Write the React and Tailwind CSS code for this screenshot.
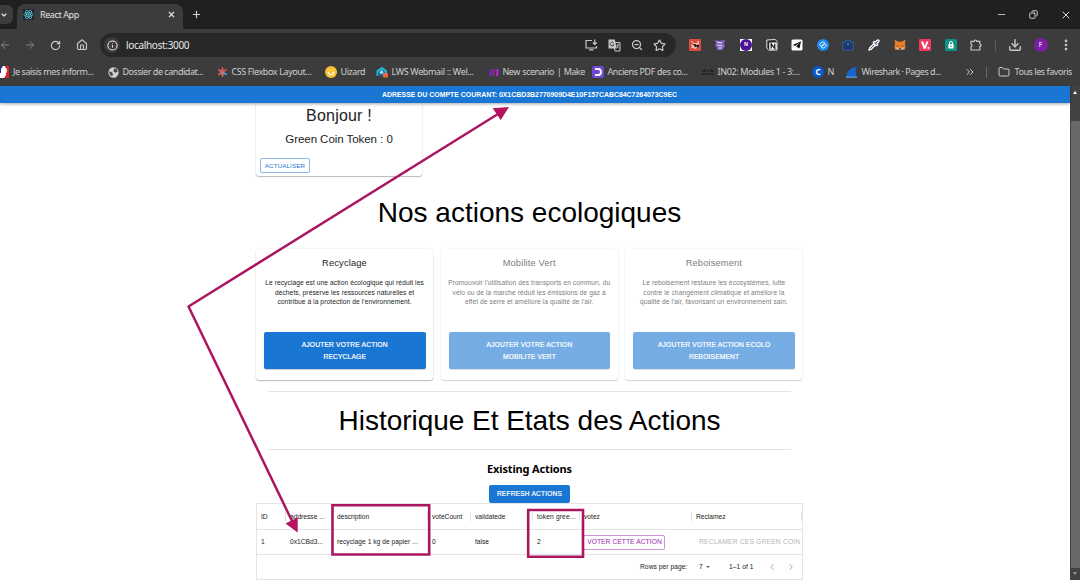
import React from "react";
import {
  ArrowLeft, ArrowRight, RotateCw, House, Info, ZoomOut, Star,
  Download, EllipsisVertical, Folder, ChevronsRight, ChevronDown, X, Plus, Minus,
  Copy, ChevronLeft, ChevronRight, Pipette,
} from "lucide-react";

const ui = "font-['Noto_Sans',sans-serif]";

function ReactLogo() {
  return (
    <svg viewBox="0 0 22 22" className="h-[11px] w-[11px] shrink-0 bg-[#20262b]">
      <g fill="none" stroke="#58c4dc" strokeWidth="1.5">
        <ellipse cx="11" cy="11" rx="9.5" ry="3.8" />
        <ellipse cx="11" cy="11" rx="9.5" ry="3.8" transform="rotate(60 11 11)" />
        <ellipse cx="11" cy="11" rx="9.5" ry="3.8" transform="rotate(120 11 11)" />
      </g>
      <circle cx="11" cy="11" r="2" fill="#58c4dc" />
    </svg>
  );
}

function TitleBar() {
  return (
    <div className="flex h-[29px] bg-[#202020]">
      <div className="flex h-full w-[17px] items-center">
        <div className="flex h-[19px] w-[13px] items-center justify-center rounded-r-md bg-[#3c3c3c] pr-1.5">
          <ChevronDown className="h-[8px] w-[8px] shrink-0 text-[#e3e3e3]" strokeWidth={3.5} />
        </div>
      </div>
      <div className="mt-[4px] flex h-[25px] w-[166px] items-center rounded-t-lg bg-[#3c3c3c] pb-[4px] pl-[6px] pr-[7px]">
        <ReactLogo />
        <span className="ml-[6px] grow text-[9px] tracking-[-0.4px] text-[#e3e3e3]">React App</span>
        <X className="h-[9px] w-[9px] text-[#e3e3e3]" strokeWidth={3} />
      </div>
      <Plus className="ml-[8px] mt-[9px] h-[11px] w-[11px] text-[#d0d0d0]" strokeWidth={2.5} />
      <div className="grow" />
      <div className="flex w-[84px] items-start justify-between pr-[8px] pt-[9px] text-[#d8d8d8]">
        <Minus className="h-[11px] w-[11px]" strokeWidth={1.8} />
        <Copy className="mt-px h-[9px] w-[9px] -scale-x-100" strokeWidth={2.5} />
        <X className="h-[12px] w-[12px]" strokeWidth={2} />
      </div>
    </div>
  );
}

function Slot({ children }) {
  return <div className="flex w-[25.6px] shrink-0 items-center justify-center">{children}</div>;
}

function Extensions() {
  return (
    <div className="flex items-center text-[#d0d0d0]">
      <Slot>
        <svg viewBox="0 0 12 12" className="h-[12px] w-[12px]">
          <rect width="12" height="12" rx="1" fill="#dd4b3e" />
          <path d="M2 2h1.500v2h5V2H10v3H8l2 1v1H8.500L10 9H8L6 10 4 9H2l1.500-2H2V6h2.500z" fill="#f0c5bf" />
          <path d="M4 5h2.500l1 1H10v2.500H7.500V7L6 8.500z" fill="#2c1a18" />
        </svg>
      </Slot>
      <Slot>
        <svg viewBox="0 0 12 12" className="h-[12px] w-[12px]">
          <path d="M1 1l4 1 6-1-1 4 1 2-3 4H3l.5-2L1 7l1-3z" fill="#8464c4" />
          <path d="M3 3l5 1M3.500 6l5 1M4.500 9h3" stroke="#e9defc" strokeWidth="1" />
        </svg>
      </Slot>
      <Slot>
        <div className="flex h-[12px] w-[12px] items-center justify-center bg-white">
          <div className="flex h-[12px] w-[12px] items-center justify-center rounded-full bg-[#4a1590] text-[5px] font-bold text-white">N</div>
        </div>
      </Slot>
      <Slot>
        <svg viewBox="0 0 12 12" className="h-[12px] w-[12px]">
          <path d="M.8 1L9 .5l2.300 2v8.700L3 11.600.8 9z" fill="#2a2a2a" stroke="#f4f4f4" strokeWidth=".9" />
          <path d="M3 3.200h8.200v7.800H3z" fill="#fff" stroke="#111" strokeWidth=".5" />
          <path d="M5.200 9.500V4.800l3.600 4.700V4.800" fill="none" stroke="#111" strokeWidth="1.200" />
        </svg>
      </Slot>
      <Slot>
        <svg viewBox="0 0 12 12" className="h-[12px] w-[12px]">
          <rect x=".5" y=".5" width="11" height="11" rx="1.500" fill="#fff" />
          <path d="M10 2.200L1.800 6l2.400 1L9 3.300 5.200 7.400 8.500 9.500z" fill="#111" />
        </svg>
      </Slot>
      <Slot>
        <svg viewBox="0 0 12 12" className="h-[12px] w-[12px]">
          <circle cx="6" cy="6" r="6" fill="#1c8bf0" />
          <path d="M7.800 4L6.300 3Q5.500 2.800 4.800 3.300L2.900 5q-.6 1 .3 1.600l1.500.8 2.800-2.200M4.200 8l1.500 1q.8.2 1.500-.3L9.100 7q.6-1-.3-1.600l-1.500-.8L4.500 6.800" fill="none" stroke="#fff" strokeWidth=".9" />
        </svg>
      </Slot>
      <Slot>
        <svg viewBox="0 0 12 12" className="h-[12px] w-[12px]">
          <path d="M.8 11.200V3.500h2.500V2.200q2.700-2.200 5.400 0v1.300h2.500v7.700z" fill="#1c3763" stroke="#2a67b4" strokeWidth=".9" />
          <path d="M6 4v2.500" stroke="#58a4f4" strokeWidth="1" />
        </svg>
      </Slot>
      <Slot><Pipette className="h-[12px] w-[12px] fill-[#2a3d78] text-white" strokeWidth={2.6} /></Slot>
      <Slot>
        <svg viewBox="0 0 12 12" className="h-[12px] w-[12px]">
          <path d="M.5.8l4 2h3l4-2-.6 4.400.6 3-1 2.700-2.600-.7L7 11H5l-1-.8-2.600.7-1-2.700.7-3z" fill="#e8812b" />
          <path d="M2.500 6.200l2 .8-1 .8zM9.500 6.200l-2 .8 1 .8z" fill="#3a2a22" />
          <path d="M2 8.800l2-.3.800.8h2.400l.8-.8 2 .3-1 1.800H3z" fill="#c9c0ba" />
          <path d="M4.800 9.300h2.400L7 10.500H5z" fill="#3a2a22" />
        </svg>
      </Slot>
      <Slot>
        <svg viewBox="0 0 12 12" className="h-[12px] w-[12px]">
          <rect width="12" height="12" rx="1" fill="#ee3a5b" />
          <path d="M2 2.500h2.200L5.800 7l1.600-4.500h2L6.600 9.800H4.700z" fill="#fff" />
          <rect x="8.500" y="8" width="1.800" height="1.800" fill="#fff" />
        </svg>
      </Slot>
      <Slot>
        <svg viewBox="0 0 12 12" className="h-[12px] w-[12px]">
          <rect width="12" height="12" rx="1.500" fill="#0f9383" />
          <rect x="3.400" y="5" width="5.200" height="4.500" rx=".5" fill="#fff" />
          <path d="M4.500 5V4a1.500 1.500 0 0 1 3 0v1" fill="none" stroke="#fff" />
          <path d="M6 6.500v1.500" stroke="#0f9383" strokeWidth="1" />
        </svg>
      </Slot>
      <Slot>
        <svg viewBox="0 0 12 12" className="h-[12px] w-[12px]">
          <path d="M1 2.300h3.200a1.300 1.300 0 0 1 2.600 0H9.800V5a1.300 1.300 0 0 1 0 2.600v3.400H1V8a1.500 1.500 0 0 0 0-2.800z" fill="none" stroke="#c7c7c7" strokeWidth="1.200" />
        </svg>
      </Slot>
    </div>
  );
}

function Toolbar() {
  return (
    <div className="flex h-[31px] items-center bg-[#3c3c3c] pt-px text-[#c7c7c7]">
      <div className="-ml-[8px] flex w-[108px] shrink-0 items-center">
        <Slot><ArrowLeft className="h-[12px] w-[12px] text-[#858585]" /></Slot>
        <Slot><ArrowRight className="h-[12px] w-[12px] text-[#858585]" /></Slot>
        <Slot><RotateCw className="h-[11px] w-[11px]" strokeWidth={2.6} /></Slot>
        <Slot><House className="h-[12px] w-[12px]" strokeWidth={2.300} /></Slot>
      </div>
      <div className="flex h-[24px] w-[576px] shrink-0 items-center rounded-full bg-[#282828] pl-[4px] pr-[4px]">
        <div className="flex h-[16px] w-[16px] items-center justify-center rounded-full bg-[#3c3c3c]">
          <Info className="h-[11px] w-[11px] text-[#e3e3e3]" strokeWidth={2.300} />
        </div>
        <span className="ml-[6px] grow text-[10px] tracking-[-0.330px] text-[#e8e8e8]">localhost:3000</span>
        <div className="flex w-[87px] items-center justify-between pr-[6px]">
          <svg viewBox="0 0 13 12" className="h-[12px] w-[13px]">
            <path d="M7 1.500H1v7.500h10.500V7M4 10.800h4.500M9.800.5v4.500M7.800 3.500l2 2 2-2" fill="none" stroke="#c7c7c7" strokeWidth="1.200" />
          </svg>
          <svg viewBox="0 0 13 13" className="h-[13px] w-[13px]">
            <path d="M5 3.500h7v8.500H7z" fill="none" stroke="#c7c7c7" />
            <path d="M.5.5h6.300l2 9H.5z" fill="#c7c7c7" />
            <path d="M5.800 3.800a2 2 0 1 0 .2 2H4.300" fill="none" stroke="#444" strokeWidth=".9" />
            <path d="M8.500 6h3M10 5v1q0 2-1.500 3M9 7l2.200 2.500" fill="none" stroke="#c7c7c7" strokeWidth=".8" />
          </svg>
          <ZoomOut className="h-[12px] w-[12px]" strokeWidth={2.500} />
          <Star className="h-[13px] w-[13px]" strokeWidth={2.200} />
        </div>
      </div>
      <div className="ml-[6px] shrink-0"><Extensions /></div>
      <div className="ml-[6px] h-[11px] w-px bg-[#5c5c5c]" />
      <div className="ml-[6px] flex items-center">
        <Slot><Download className="h-[14px] w-[14px]" strokeWidth={2.500} /></Slot>
        <Slot>
          <div className="flex h-[14px] w-[14px] items-center justify-center rounded-full bg-[#7b1fa2] text-[7px] text-white">F</div>
        </Slot>
        <Slot><EllipsisVertical className="h-[14px] w-[14px]" strokeWidth={2.600} /></Slot>
      </div>
    </div>
  );
}

function Bookmark({ className, icon, label }) {
  return (
    <div className={"flex shrink-0 items-center " + className}>
      <div className="mr-[4px] flex w-[11px] shrink-0 justify-center">{icon}</div>
      <span className="whitespace-nowrap">{label}</span>
    </div>
  );
}

function Bookmarks() {
  return (
    <div className="flex h-[26px] items-center bg-[#3c3c3c] pb-[2px] text-[9px] text-[#cfcfcf]">
      <Bookmark className="-ml-[2px] w-[109.500px] tracking-[-0.450px]" label="Je saisis mes inform..." icon={
        <svg viewBox="0 0 11 12" className="h-[12px] w-[11px]">
          <rect width="11" height="12" fill="#fff" />
          <path d="M0 0h5L3 3v4H0z" fill="#2b2f86" /><path d="M7 0h4v12H6l2-3z" fill="#e1232f" />
          <circle cx="6" cy="4.500" r="3" fill="#fff" />
        </svg>} />
      <Bookmark className="w-[109px] tracking-[-0.470px]" label="Dossier de candidat..." icon={
        <svg viewBox="0 0 12 12" className="h-[11px] w-[11px]">
          <circle cx="6" cy="6" r="5.600" fill="#d0d0d0" />
          <path d="M1.500 4.500l3 1.500 1 1.500-1 2.500Q1 8.500 1.500 4.500zM6.500 1.500l3 .8 1 3-2.500 1-2-1.500z" fill="#454545" />
        </svg>} />
      <Bookmark className="w-[109px] tracking-[-0.400px]" label="CSS Flexbox Layout..." icon={
        <svg viewBox="0 0 12 12" className="h-[12px] w-[12px]" strokeWidth="1.800">
          <path d="M6 6V1M6 6L1.500 3.500M6 6l-4.500 3" stroke="#f0605a" /><path d="M6 6v5" stroke="#e98a4e" />
          <path d="M6 6l4.500-3" stroke="#e0524f" /><path d="M6 6l4.500 3" stroke="#4ba3d8" />
        </svg>} />
      <Bookmark className="w-[51px] tracking-[-0.450px]" label="Uizard" icon={
        <svg viewBox="0 0 12 12" className="h-[12px] w-[12px] shrink-0">
          <circle cx="6" cy="6" r="6" fill="#fbc02d" />
          <path d="M3.300 5.800q.2 2.900 2.700 2.900t2.700-2.900" fill="none" stroke="#fff" strokeWidth="1.300" />
          <path d="M4.300 3.500v1M7.700 3.500v1" stroke="#fff" />
        </svg>} />
      <Bookmark className="w-[111px] tracking-[-0.350px]" label="LWS Webmail :: Wel..." icon={
        <svg viewBox="0 0 12 12" className="h-[12px] w-[12px] shrink-0">
          <path d="M.5 4.500L6 .8l5 3.700V10H.5z" fill="#26b5d4" />
          <path d="M2 10V6q4-4 7 0v4z" fill="#116c9c" /><circle cx="5.500" cy="6.300" r="1.700" fill="#9fe6f2" />
          <rect x="7" y="7" width="5" height="4.600" rx="1" fill="#ef6740" />
        </svg>} />
      <Bookmark className="w-[105px] tracking-[-0.620px]" label={<span className="tracking-[-0.520px] [word-spacing:0.800px]">New scenario | Make</span>} icon={
        <svg viewBox="0 0 12 10" className="h-[9px] w-[11px]">
          <path d="M3 1h2L3 9H.8z" fill="#7e22ce" /><path d="M6 1h2.200L6 9H4z" fill="#a21caf" /><path d="M9.500 1h2v8H9z" fill="#c026d3" />
        </svg>} />
      <Bookmark className="w-[110px] tracking-[-0.400px]" label="Anciens PDF des co..." icon={
        <svg viewBox="0 0 12 12" className="h-[12px] w-[12px] shrink-0">
          <rect width="12" height="12" rx="2" fill="#6f48d8" />
          <path d="M3 3h3a3 3 0 0 1 0 6H3" fill="none" stroke="#fff" strokeWidth="1.800" />
        </svg>} />
      <Bookmark className="w-[110px] tracking-[-0.380px]" label="IN02: Modules 1 - 3:..." icon={
        <svg viewBox="0 0 12 8" className="h-[8px] w-[12px] shrink-0">
          <path d="M1 2v2M3 1v3M6 2v2M9 1v3M11 2v2M.5 6h3M4.500 6h3M8.500 6h3" stroke="#1d1d1d" strokeWidth="1.300" />
        </svg>} />
      <Bookmark className="w-[34px]" label="N" icon={
        <div className="flex h-[12px] w-[12px] shrink-0 items-center justify-center rounded-full bg-[#0b57d0] text-[8px] font-bold text-white">C</div>} />
      <Bookmark className="w-[117px] tracking-[-0.500px]" label="Wireshark · Pages d..." icon={
        <svg viewBox="0 0 12 12" className="h-[12px] w-[12px] shrink-0">
          <path d="M0 11Q1.500 2 11 .8 8 5 11 11z" fill="#1766d2" /><path d="M0 11.200h11" stroke="#9cc4f5" strokeWidth=".8" />
        </svg>} />
      <ChevronsRight className="h-[12px] w-[12px] shrink-0" />
      <div className="ml-[10px] h-[11px] w-px shrink-0 bg-[#6a6a6a]" />
      <Folder className="ml-[11px] h-[12px] w-[12px] shrink-0" />
      <span className="ml-[5px] whitespace-nowrap tracking-[-0.450px]">Tous les favoris</span>
    </div>
  );
}

const cards = [
  {
    title: "Recyclage",
    lines: ["Le recyclage est une action écologique qui réduit les", "déchets, préserve les ressources naturelles et", "contribue à la protection de l'environnement."],
    action: ["AJOUTER VOTRE ACTION", "RECYCLAGE"],
    enabled: true,
  },
  {
    title: "Mobilite Vert",
    lines: ["Promouvoir l'utilisation des transports en commun, du", "vélo ou de la marche réduit les émissions de gaz à", "effet de serre et améliore la qualité de l'air."],
    action: ["AJOUTER VOTRE ACTION", "MOBILITE VERT"],
  },
  {
    title: "Reboisement",
    lines: ["Le reboisement restaure les écosystèmes, lutte", "contre le changement climatique et améliore la", "qualité de l'air, favorisant un environnement sain."],
    action: ["AJOUTER VOTRE ACTION ECOLO", "REBOISEMENT"],
  },
];

function ActionCard({ title, lines, action, enabled }) {
  return (
    <div className={"flex h-[131px] w-[177px] flex-col rounded-[3px] bg-white px-[8px] text-center shadow-[0_1px_1px_rgba(0,0,0,0.25),0_0_2px_rgba(0,0,0,0.14)] " + (enabled ? "" : "opacity-60")}>
      <h3 className="mt-[7px] text-[9.300px] leading-[14px] tracking-[0.150px] text-[#222]">{title}</h3>
      <div className="mt-[8px] flex h-[54px] flex-col items-center whitespace-nowrap text-[6.670px] leading-[9.500px] tracking-[0.075px] text-[#222]">
        {lines.map((l) => <span key={l}>{l}</span>)}
      </div>
      <button className="mr-[-0.500px] flex h-[37px] flex-col items-center justify-center rounded-[2px] bg-[#1976d2] text-[6.670px] font-medium leading-[12px] tracking-[0.180px] text-white shadow-[0_1px_1px_rgba(0,0,0,0.2)] [-webkit-text-stroke:0.200px_white]">
        {action.map((l) => <span key={l}>{l}</span>)}
      </button>
    </div>
  );
}

function HeadCell({ className, children }) {
  return (
    <div className={"flex h-full shrink-0 items-center justify-between whitespace-nowrap " + className}>
      <span>{children}</span>
      <div className="h-[9px] w-px bg-[#e0e0e0]" />
    </div>
  );
}

function ActionsTable() {
  return (
    <div className="h-[77px] w-[547px] border border-[#e4e4e4] text-[6.670px] text-[#222]">
      <div className="flex h-[26px] items-center border-b border-[#e4e4e4] pl-[4px]">
        <HeadCell className="w-[25px]">ID</HeadCell>
        <HeadCell className="w-[47px] pl-[4px]">addresse ...</HeadCell>
        <HeadCell className="w-[95px] pl-[4px]">description</HeadCell>
        <HeadCell className="w-[43px] pl-[4px]">voteCount</HeadCell>
        <HeadCell className="w-[62px] pl-[4px]">validatede</HeadCell>
        <HeadCell className="w-[47px] pl-[4px] tracking-[0.130px]">token gree...</HeadCell>
        <HeadCell className="w-[112px] pl-[4px]">votez</HeadCell>
        <HeadCell className="w-[110px] pl-[4px]">Reclamez</HeadCell>
      </div>
      <div className="flex h-[25px] items-center whitespace-nowrap border-b border-[#e4e4e4] pl-[4px]">
        <span className="w-[29px] shrink-0">1</span>
        <span className="w-[47px] shrink-0">0x1CBd3...</span>
        <span className="w-[95px] shrink-0 tracking-[0.030px]">recyclage 1 kg de papier ...</span>
        <span className="w-[43px] shrink-0">0</span>
        <span className="w-[62px] shrink-0">false</span>
        <span className="w-[46px] shrink-0">2</span>
        <button className="flex h-[15px] w-[82px] shrink-0 items-center justify-center rounded-[2px] border border-[#cd93d7] pl-px text-[6.670px] font-medium tracking-[0.080px] text-[#9c27b0]">VOTER CETTE ACTION</button>
        <span className="ml-[34px] text-[6.670px] tracking-[0.210px] text-[#b4b4b4]">RECLAMER CES GREEN COIN</span>
      </div>
      <div className="flex h-[24px] items-center pl-[383px] text-[6.670px]">
        <span className="w-[59px] whitespace-nowrap tracking-[0.060px]">Rows per page:</span>
        <span className="w-[7px]">7</span>
        <div className="h-0 w-0 border-x-[2.500px] border-t-[2.500px] border-x-transparent border-t-[#666]" />
        <span className="ml-[19px] w-[38px] whitespace-nowrap tracking-[0.060px]">1–1 of 1</span>
        <ChevronLeft className="h-[10px] w-[10px] text-[#999]" />
        <ChevronRight className="ml-[9px] h-[10px] w-[10px] text-[#999]" />
      </div>
    </div>
  );
}

function Annotations() {
  return (
    <svg viewBox="0 0 1080 580" className="pointer-events-none absolute inset-0 h-[580px] w-[1080px]">
      <path d="M498 114L188.500 306.500 292 521" fill="none" stroke="#ab165f" strokeWidth="2.500" strokeLinejoin="round" />
      <path d="M509 107L492.700 108.200 500.700 120zM297.700 532.500L285.500 523.500 297.700 517.500z" fill="#b5125f" />
      <path d="M332.500 505.200h96.700v49.300h-96.700zM528.200 510H583v46.800h-54.800z" fill="none" stroke="#ab165f" strokeWidth="2.600" />
    </svg>
  );
}

function Page() {
  return (
    <div className="flex h-[494px]">
      <main className="flex w-[1070px] flex-col bg-white font-['Liberation_Sans',Arial,sans-serif]">
        <header className="z-10 flex h-[17px] shrink-0 items-center justify-center bg-[#1976d2] pr-[11px] pt-px text-[6.930px] font-bold text-white shadow-[0_1px_3px_rgba(0,0,0,0.35)]">
          ADRESSE DU COMPTE COURANT: 0X1CBD3B2770909D4E10F157CABC84C7264073C9EC
        </header>
        <div className="ml-[256px] flex w-[547px] flex-col">
          <section className="flex h-[73px] w-[166px] flex-col items-center rounded-b-[3px] text-[#222] shadow-[0_1px_1px_rgba(0,0,0,0.25),0_0_2px_rgba(0,0,0,0.14)]">
            <h2 className="mt-[2px] text-[16px] leading-[22px] tracking-[0.200px]">Bonjour !</h2>
            <p className="mt-[4px] text-[11.500px] leading-[16px] tracking-[-0.050px]">Green Coin Token : 0</p>
            <button className="ml-[4px] mt-[11px] flex h-[15px] w-[50px] items-center justify-center self-start rounded-[2px] border border-[#8cbae8] text-[6.200px] tracking-[0.150px] text-[#1976d2]">ACTUALISER</button>
          </section>
          <h1 className="mt-[21px] text-center text-[28px] leading-[32px] text-black">Nos actions ecologiques</h1>
          <section className="mt-[20px] flex gap-[7.700px]">
            {cards.map((c) => <ActionCard key={c.title} {...c} />)}
          </section>
          <div className="mx-[12px] mt-[11px] flex h-[59px] items-center justify-center border-y border-[#e4e4e4]">
            <h1 className="whitespace-nowrap text-[28px] leading-[32px] tracking-[-0.030px] text-black">Historique Et Etats des Actions</h1>
          </div>
          <h2 className={"mt-[11px] text-center text-[11px] font-bold leading-[15px] tracking-[-0.150px] text-black " + ui}>Existing Actions</h2>
          <button className="mt-[9px] flex h-[18px] w-[81px] items-center justify-center self-center rounded-[2px] bg-[#1976d2] text-[6.500px] font-medium tracking-[0.250px] text-white [-webkit-text-stroke:0.200px_white]">REFRESH ACTIONS</button>
          <ActionsTable />
        </div>
      </main>
      <div className="flex w-[10px] flex-col items-center bg-[#424242]">
        <div className="mb-[27px] mt-[5px] h-0 w-0 border-x-[2.500px] border-b-[3px] border-x-transparent border-b-white" />
        <div className="h-[447px] w-[9px] self-end bg-[#686868]" />
        <div className="mt-[4px] h-0 w-0 border-x-[2.500px] border-t-[3px] border-x-transparent border-t-[#999]" />
      </div>
    </div>
  );
}

export default function App() {
  return (
    <div className={"relative h-[580px] w-[1080px] overflow-hidden bg-white " + ui}>
      <TitleBar />
      <Toolbar />
      <Bookmarks />
      <Page />
      <Annotations />
    </div>
  );
}
